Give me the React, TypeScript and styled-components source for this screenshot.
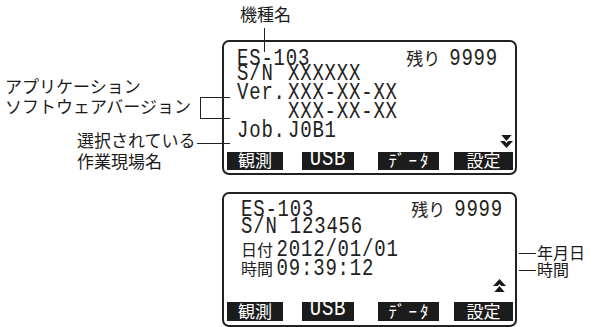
import React from 'react'
import styled, { createGlobalStyle } from 'styled-components'

const GlobalStyle = createGlobalStyle`
  html, body {
    margin: 0;
    padding: 0;
    background: #fff;
  }
  body {
    font-family: 'Noto Sans CJK JP', 'Liberation Sans', sans-serif;
    color: #1a1a1a;
  }
`

const Canvas = styled.div`
  position: relative;
  width: 597px;
  height: 327px;
  overflow: hidden;
  box-sizing: border-box;
  padding: 40px 0 0 222px;
  display: flex;
  flex-direction: column;
  gap: 17px;
`

const Screen = styled.div<{ $pt: number; $pb: number }>`
  flex: none;
  width: 295px;
  height: 135px;
  box-sizing: border-box;
  border: 2px solid #222;
  border-radius: 7px;
  padding: ${(p) => p.$pt}px 2px ${(p) => p.$pb}px 0;
  display: flex;
  flex-direction: column;
  color: #222;
`

const Rows = styled.div<{ $pl: number }>`
  display: flex;
  flex-direction: column;
  padding-left: ${(p) => p.$pl}px;
`

// LCD rows: monospace cells, glyphs stretched tall to match the display font
const Line = styled.div<{ $cols?: string; $h?: number }>`
  display: grid;
  grid-template-columns: ${(p) => p.$cols ?? '1fr auto'};
  align-items: baseline;
  height: ${(p) => p.$h ?? 19}px;
  line-height: 19px;
  font-family: 'Liberation Mono', monospace;
  font-size: 19px;
  white-space: pre;
`

const Lcd = styled.span<{ $origin?: 'left' | 'right' }>`
  display: inline-block;
  font-family: 'Liberation Mono', monospace;
  font-size: 19px;
  line-height: 15px;
  letter-spacing: 0.8px;
  transform: scaleY(1.22);
  transform-origin: ${(p) => p.$origin ?? 'left'} 12.6px;
`

const Kana = styled.span<{ $size?: number }>`
  font-family: 'Noto Sans CJK JP', sans-serif;
  font-size: ${(p) => p.$size ?? 17}px;
  line-height: 17px;
`

const Right = styled.div<{ $mr: number }>`
  display: flex;
  align-items: baseline;
  gap: 9px;
  margin-right: ${(p) => p.$mr}px;
`

const ArrowSlot = styled.div<{ $drop: number }>`
  align-self: end;
  display: flex;
  margin-bottom: -${(p) => p.$drop}px;
`

const ArrowRow = styled.div<{ $h: number; $mr: number }>`
  display: flex;
  justify-content: flex-end;
  align-items: flex-start;
  height: ${(p) => p.$h}px;
  padding-right: ${(p) => p.$mr}px;
`

const Keys = styled.div<{ $h: number }>`
  display: flex;
  margin-top: auto;
  height: ${(p) => p.$h}px;
  padding-left: 3px;
`

const Key = styled.div<{ $w: number; $ml: number }>`
  flex: none;
  box-sizing: border-box;
  width: ${(p) => p.$w}px;
  margin-left: ${(p) => p.$ml}px;
  padding-bottom: 2px;
  background: #1c1c1c;
  color: #fff;
  display: flex;
  align-items: center;
  justify-content: center;
  font-family: 'Noto Sans CJK JP', sans-serif;
  font-size: 17px;
  line-height: 16px;
`

const HalfKana = styled.span`
  letter-spacing: 3px;
  margin-right: -3px;
`

const Note = styled.div<{ $x: number; $y: number; $size?: number; $lh?: number }>`
  position: absolute;
  left: ${(p) => p.$x}px;
  top: ${(p) => p.$y}px;
  font-size: ${(p) => p.$size ?? 17}px;
  line-height: ${(p) => p.$lh ?? 20}px;
  white-space: nowrap;
  color: #1a1a1a;
`

const HRule = styled.div<{ $x: number; $y: number; $w: number }>`
  position: absolute;
  left: ${(p) => p.$x}px;
  top: ${(p) => p.$y}px;
  width: ${(p) => p.$w}px;
  height: 1px;
  background: #222;
`

const VRule = styled.div<{ $x: number; $y: number; $h: number }>`
  position: absolute;
  left: ${(p) => p.$x}px;
  top: ${(p) => p.$y}px;
  width: 1px;
  height: ${(p) => p.$h}px;
  background: #222;
`

const DoubleArrow = ({ up }: { up?: boolean }) => (
  <svg width="13" height="14" viewBox="0 0 13 14">
    <g transform={up ? undefined : 'rotate(180 6.5 7)'} fill="#1a1a1a">
      <polygon points="6.5,0 13,7 0,7" />
      <polygon points="6.5,6 13,13.5 0,13.5" stroke="#fff" strokeWidth="1.2" />
    </g>
  </svg>
)

const SoftKeys = ({ h }: { h: number }) => (
  <Keys $h={h}>
    <Key $w={56} $ml={0}>観測</Key>
    <Key $w={52} $ml={19}>
      <Lcd>USB</Lcd>
    </Key>
    <Key $w={61} $ml={24}>
      <HalfKana>ﾃﾞｰﾀ</HalfKana>
    </Key>
    <Key $w={59} $ml={15}>設定</Key>
  </Keys>
)

export default function App() {
  return (
    <Canvas>
      <GlobalStyle />

      <Screen $pt={7} $pb={3}>
        <Rows $pl={13}>
          <Line>
            <Lcd>ES-103</Lcd>
            <Right $mr={15}>
              <Kana>残り</Kana>
              <Lcd $origin="right">9999</Lcd>
            </Right>
          </Line>
          <Line $cols="51px 1fr">
            <Lcd>S/N</Lcd>
            <Lcd>XXXXXX</Lcd>
          </Line>
          <Line $cols="51px 1fr">
            <Lcd>Ver.</Lcd>
            <Lcd>XXX-XX-XX</Lcd>
          </Line>
          <Line $cols="51px 1fr">
            <span />
            <Lcd>XXX-XX-XX</Lcd>
          </Line>
          <Line $cols="51px 1fr auto">
            <Lcd>Job.</Lcd>
            <Lcd>J0B1</Lcd>
            <ArrowSlot $drop={4}>
              <DoubleArrow />
            </ArrowSlot>
          </Line>
        </Rows>
        <SoftKeys h={18} />
      </Screen>

      <Screen $pt={6} $pb={4}>
        <Rows $pl={17}>
          <Line $h={21}>
            <Lcd>ES-103</Lcd>
            <Right $mr={10}>
              <Kana>残り</Kana>
              <Lcd $origin="right">9999</Lcd>
            </Right>
          </Line>
          <Line $h={20} $cols="1fr">
            <Lcd>S/N 123456</Lcd>
          </Line>
          <Line $h={19} $cols="auto 1fr">
            <Kana $size={16}>日付 </Kana>
            <Lcd>2012/01/01</Lcd>
          </Line>
          <Line $h={19} $cols="auto 1fr">
            <Kana $size={16}>時間 </Kana>
            <Lcd>09:39:12</Lcd>
          </Line>
        </Rows>
        <ArrowRow $h={15} $mr={7}>
          <DoubleArrow up />
        </ArrowRow>
        <SoftKeys h={19} />
      </Screen>

      <Note $x={240} $y={4}>機種名</Note>
      <VRule $x={264} $y={28} $h={24} />

      <Note $x={5} $y={76}>
        アプリケーション
        <br />
        ソフトウェアバージョン
      </Note>
      <VRule $x={200} $y={97} $h={22} />
      <HRule $x={200} $y={97} $w={30} />
      <HRule $x={200} $y={118} $w={30} />

      <Note $x={77} $y={129} $lh={21}>
        選択されている
        <br />
        作業現場名
      </Note>
      <HRule $x={197} $y={143} $w={33} />

      <HRule $x={519} $y={253} $w={17} />
      <Note $x={537} $y={245} $size={16} $lh={15}>年月日</Note>
      <HRule $x={519} $y={270} $w={17} />
      <Note $x={537} $y={262} $size={16} $lh={15}>時間</Note>
    </Canvas>
  )
}
